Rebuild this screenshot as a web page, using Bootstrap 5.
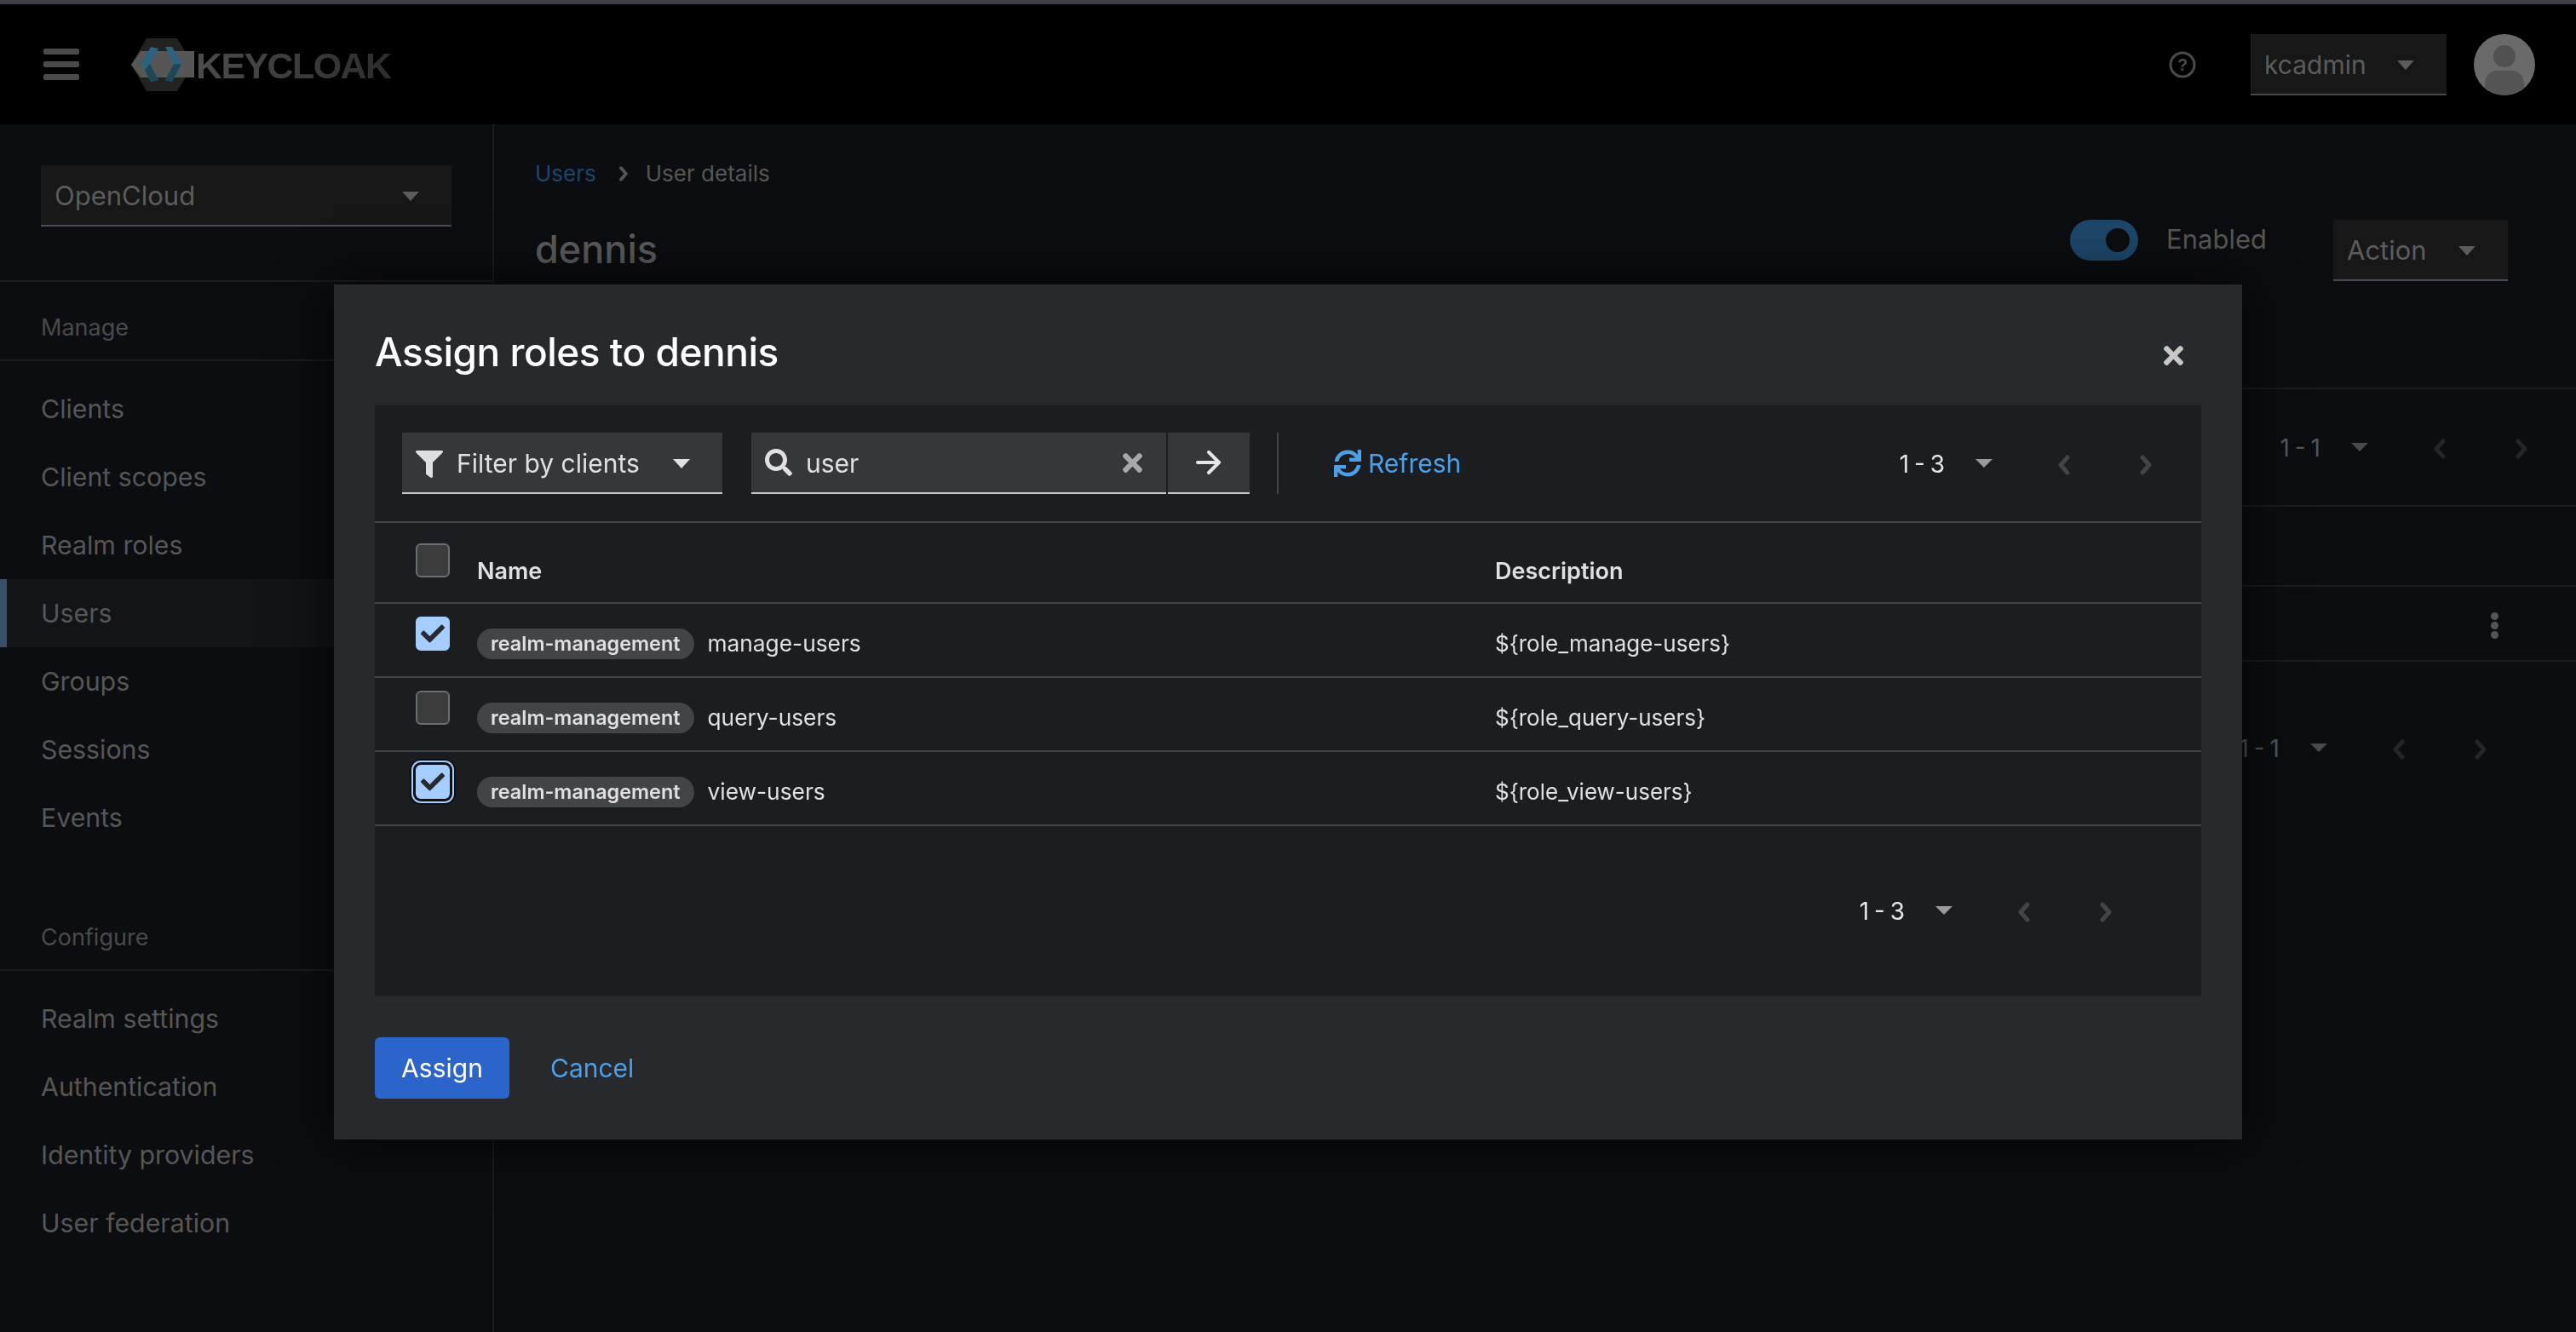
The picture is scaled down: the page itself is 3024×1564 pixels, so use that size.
<!DOCTYPE html>
<html lang="en">
<head>
    <meta charset="UTF-8">
    <meta name="viewport" content="width=device-width, initial-scale=1.0">
    <title>Keycloak - Assign roles</title>
    <link href="https://cdn.jsdelivr.net/npm/bootstrap@5.3.0/dist/css/bootstrap.min.css" rel="stylesheet">
    <style>
        body { background: #0c0d10; font-family: Inter, "Liberation Sans", sans-serif; font-size: 30.3px; color: #565656; overflow: hidden; height: 1564px; }
        .kc-strip { height: 5px; background: #3f3f46; }
        .kc-header { height: 141px; background: #000; padding: 0 48px 0 51px; flex-wrap: nowrap; }
        .kc-burger { width: 42px; height: 37px; }
        .kc-logo { margin-left: 61px; }
        .kc-logo-text { font-family: "Liberation Sans", sans-serif; font-weight: 700; font-size: 43px; letter-spacing: -1.6px; line-height: 1; padding-top: 3px; background: linear-gradient(90deg, #4c4c4c, #2d2d2d); -webkit-background-clip: text; background-clip: text; color: transparent; margin-left: 2px; }

        /* dropdowns that look like patternfly menu toggles */
        .kc-toggle { display: flex; align-items: center; justify-content: space-between; height: 72px; padding: 3px 38px 0 16px; background: #171717; color: #5c5c5c; border: 0; border-bottom: 2px solid #4a4a4a; border-radius: 0; font-size: 31px; }
        .kc-toggle:hover, .kc-toggle:active { background: #171717; color: #5c5c5c; border-bottom: 2px solid #4a4a4a; }
        .kc-toggle::after { margin: 0; border-top-width: 11px; border-left-width: 10px; border-right-width: 10px; }
        .kc-toggle-user { width: 230px; margin: 0 32px 0 64px; font-size: 30px; }
        .kc-toggle-realm { width: 482px; }
        .kc-toggle-action { width: 205px; }
        .kc-toggle-filter { width: 376px; background: #36373b; color: #e0e0e0; border-bottom-color: #c7c7c7; font-size: 30px; }
        .kc-toggle-filter:hover, .kc-toggle-filter:active { background: #36373b; color: #e0e0e0; border-bottom-color: #c7c7c7; }

        .kc-sidebar { width: 580px; border-right: 2px solid #1b1c1f; flex-shrink: 0; }
        .kc-realm { padding: 48px; height: 185px; border-bottom: 2px solid #1b1c1f; }
        .kc-group { height: 93px; line-height: 108px; padding-left: 48px; font-size: 27px; color: #4a4a4a; border-bottom: 2px solid #1b1c1f; }
        .kc-group-second { margin-top: 47px; }
        .kc-sidebar .list-group { padding-top: 16px; --bs-list-group-bg: transparent; --bs-list-group-color: #565656; --bs-list-group-border-width: 0; border-radius: 0; }
        .kc-sidebar .list-group-item { height: 80px; line-height: 80px; padding: 0 0 0 48px; }
        .kc-sidebar .list-group-item.active { background: #131417; color: #565656; border-left: 8px solid #3a5068; padding-left: 40px; margin: 0; }

        .kc-page-head { height: 311px; padding: 48px 48px 0; border-bottom: 2px solid #1b1c1f; }
        .kc-crumbs { font-size: 26px; line-height: 20px; }
        .kc-crumbs a { color: #1f4568; text-decoration: none; }
        .kc-crumbs svg { margin: 0 20px 0 26px; }
        .kc-name { font-size: 45px; font-weight: 500; color: #5a5a5a; margin: 5px 0 0; line-height: 60px; }
        .kc-head-row { margin-top: 44px; padding-right: 32px; }
        .kc-switch { width: 80px; height: 48px; background: #1e4668; border-radius: 24px; display: flex; align-items: center; justify-content: flex-end; padding-right: 10px; }
        .kc-switch i { width: 28px; height: 28px; border-radius: 50%; background: #0c0d10; }
        .kc-enabled { margin: 0 78px 0 33px; font-size: 31px; }
        .kc-bg-toolbar { height: 138px; border-bottom: 2px solid #1b1c1f; padding-right: 16px; }
        .kc-bg-head { height: 94px; border-bottom: 2px solid #1b1c1f; }
        .kc-bg-row { height: 88px; border-bottom: 2px solid #1b1c1f; padding-right: 91px; }
        .kc-kebab { width: 9px; height: 31px; margin-top: 4px; color: #555; }
        .kc-bg-foot { height: 202px; padding-right: 64px; }

        .kc-pager { font-size: 28px; color: #e6e6e6; }
        .kc-pager .count { word-spacing: -2px; padding-top: 2px; }
        .kc-pager .caret { width: 0; height: 0; margin-left: 36px; margin-right: 36px; border-top: 10px solid #9a9a9a; border-left: 10px solid transparent; border-right: 10px solid transparent; }
        .kc-pager .chev { width: 96px; text-align: center; color: #434448; line-height: 1; }
        .kc-pager-dim { color: #555; }
        .kc-pager-dim .caret { border-top-color: #4a4a4a; }
        .kc-pager-dim .chev { color: #242528; }

        .kc-modal .modal-dialog { max-width: 2240px; width: 2240px; margin: 334px 0 0 392px; }
        .kc-modal .modal-content { --bs-modal-bg: #27292d; height: 1004px; border: 0; border-radius: 0; box-shadow: 0 0 60px rgba(0, 0, 0, .75); }
        .kc-modal .modal-header { height: 142px; padding: 48px 69px 0 48px; border: 0; align-items: flex-start; }
        .kc-modal .modal-title { font-size: 46px; font-weight: 500; line-height: 62px; color: #fff; letter-spacing: -.5px; }
        .kc-close { margin-top: 24px; width: 23px; height: 23px; color: #c7c7c7; }
        .kc-modal .modal-body { padding: 0 48px; flex: none; }
        .kc-panel { background: #1b1d21; height: 694px; font-size: 26px; color: #e0e0e0; }
        .kc-toolbar { height: 138px; padding: 32px 17px 32px 32px; border-bottom: 2px solid #434448; }
        .kc-search { width: 585px; margin-left: 34px; height: 72px; }
        .kc-search-box { width: 487px; background: #36373b; border-bottom: 2px solid #c7c7c7; padding: 0 28px 0 16px; }
        .kc-search-box input { background: transparent; border: 0; color: #e0e0e0; font-size: 30px; padding: 2px 0 0 16px; box-shadow: none; }
        .kc-search-btn { width: 96px; margin-left: 2px; background: #36373b; border-bottom: 2px solid #c7c7c7; color: #e6e6e6; }
        .kc-vr { width: 2px; height: 72px; background: #434448; margin-left: 32px; }
        .kc-refresh { margin-left: 65px; color: #4d9fe6; font-size: 30px; gap: 8px; }
        .kc-table { --bs-table-bg: transparent; --bs-table-color: #e0e0e0; --bs-table-border-color: #434448; table-layout: fixed; }
        .kc-table > :not(caption) > * > * { border-bottom-width: 2px; padding: 0; vertical-align: top; font-size: 26.3px; line-height: 36px; }
        .kc-table th { font-weight: 600; height: 94px; padding-top: 39px; font-size: 27px; }
        .kc-table td { height: 87px; padding-top: 29px; }
        .kc-table .cb { width: 120px; padding: 15px 0 0 48px; }
        .kc-table th.cb { padding-top: 24px; }
        .kc-table .col-name { width: 1195px; }
        .kc-table td:last-child { font-size: 26px; }
        .form-check-input.kc-check { width: 40px; height: 40px; margin: 0; border: 2px solid #6a6e73; border-radius: 6px; background-color: #3c3c3c; display: block; }
        .form-check-input.kc-check:checked { background-color: #a6cdff; border-color: #a6cdff; background-size: 28px; --bs-form-check-bg-image: url("data:image/svg+xml,%3Csvg xmlns='http://www.w3.org/2000/svg' viewBox='0 0 512 512'%3E%3Cpath fill='%23292a2e' d='M173.898 439.404l-166.4-166.4c-9.997-9.997-9.997-26.206 0-36.204l36.203-36.204c9.997-9.998 26.207-9.998 36.204 0L192 312.69 432.095 72.596c9.997-9.997 26.207-9.997 36.204 0l36.203 36.204c9.997 9.997 9.997 26.206 0 36.204l-294.4 294.401c-9.998 9.997-26.207 9.997-36.204-.001z'/%3E%3C/svg%3E"); }
        .form-check-input.kc-check.kc-focus { box-shadow: 0 0 0 3px #0f1013, 0 0 0 5px #a6cdff, 0 0 0 7px #0f1013; }
        .kc-pill { background: #434448; color: #e0e0e0; font-size: 23.4px; font-weight: 600; padding: 0 16px; height: 36px; line-height: 36px; margin-right: 16px; vertical-align: top; }
        .kc-panel-foot { height: 197px; padding-right: 64px; }
        .kc-modal .modal-footer { padding: 48px; border: 0; justify-content: flex-start; gap: 16px; }
        .kc-modal .modal-footer > * { margin: 0; }
        .kc-btn-assign { width: 158px; height: 72px; font-size: 30px; background: #2b65cb; border: 0; border-radius: 6px; padding: 0; }
        .kc-btn-cancel { height: 72px; font-size: 30px; color: #4d9fe6; padding: 0 32px; text-decoration: none; border: 0; }
    </style>
</head>
<body class="d-flex flex-column">
    <!-- icon sprites -->
    <svg class="d-none">
        <symbol id="chev-l" viewBox="0 0 16 24"><path d="M12 3 4 12l8 9" fill="none" stroke="currentColor" stroke-width="5" stroke-linecap="round" stroke-linejoin="round"/></symbol>
        <symbol id="chev-r" viewBox="0 0 16 24"><path d="m4 3 8 9-8 9" fill="none" stroke="currentColor" stroke-width="5" stroke-linecap="round" stroke-linejoin="round"/></symbol>
        <symbol id="times" viewBox="0 0 352 512"><path fill="currentColor" d="M242.72 256l100.07-100.07c12.28-12.28 12.28-32.19 0-44.48l-22.24-22.24c-12.28-12.28-32.19-12.28-44.48 0L176 189.28 75.93 89.21c-12.28-12.28-32.19-12.28-44.48 0L9.21 111.45c-12.28 12.28-12.28 32.19 0 44.48L109.28 256 9.21 356.07c-12.28 12.28-12.28 32.19 0 44.48l22.24 22.24c12.28 12.28 32.2 12.28 44.48 0L176 322.72l100.07 100.07c12.28 12.28 32.2 12.28 44.48 0l22.24-22.24c12.28-12.28 12.28-32.19 0-44.48L242.72 256z"/></symbol>
    </svg>

    <div class="kc-strip"></div>
    <header class="navbar kc-header">
        <div class="d-flex align-items-center">
            <svg class="kc-burger" viewBox="0 0 42 37"><rect width="42" height="7" rx="2" fill="#4a4a4a"/><rect y="15" width="42" height="7" rx="2" fill="#4a4a4a"/><rect y="30" width="42" height="7" rx="2" fill="#4a4a4a"/></svg>
            <div class="kc-logo d-flex align-items-center">
                <svg width="74" height="62" viewBox="154 48 74 62">
                    <polygon points="172,48 208,48 227,79 208,110 172,110 154,79" fill="#222"/>
                    <polygon points="165,63 228,63 228,94 165,94 154,79" fill="#565656"/>
                    <polygon points="177,58 186,60 176,78 186,97 177,99 166,78" fill="#2a6480"/>
                    <polygon points="176,78 186,97 177,99 170,85" fill="#1d4659"/>
                    <polygon points="194,58 202,58 213,78 202,99 194,97 204,78" fill="#2a6480"/>
                    <polygon points="204,78 213,78 202,99 194,97" fill="#1d4659"/>
                </svg>
                <span class="kc-logo-text">KEYCLOAK</span>
            </div>
        </div>
        <div class="d-flex align-items-center">
            <svg width="32" height="32" viewBox="0 0 32 32"><circle cx="16" cy="16" r="14" fill="none" stroke="#4a4a4a" stroke-width="3"/><text x="16" y="23" text-anchor="middle" font-family="Liberation Sans, sans-serif" font-weight="700" font-size="20" fill="#4a4a4a">?</text></svg>
            <button class="btn dropdown-toggle kc-toggle kc-toggle-user" type="button">kcadmin</button>
            <svg width="72" height="72" viewBox="0 0 72 72"><defs><clipPath id="av"><circle cx="36" cy="36" r="36"/></clipPath></defs><g clip-path="url(#av)"><rect width="72" height="72" fill="#6a6a6a"/><circle cx="36" cy="26" r="13" fill="#515151"/><path d="M13 72V58c0-10 8-15 15-15h16c7 0 15 5 15 15v14z" fill="#545454"/></g></svg>
        </div>
    </header>

    <div class="d-flex flex-grow-1">
        <aside class="kc-sidebar">
            <div class="kc-realm">
                <button class="btn dropdown-toggle kc-toggle kc-toggle-realm" type="button">OpenCloud</button>
            </div>
            <div class="kc-group">Manage</div>
            <div class="list-group list-group-flush">
                <div class="list-group-item">Clients</div>
                <div class="list-group-item">Client scopes</div>
                <div class="list-group-item">Realm roles</div>
                <div class="list-group-item active">Users</div>
                <div class="list-group-item">Groups</div>
                <div class="list-group-item">Sessions</div>
                <div class="list-group-item">Events</div>
            </div>
            <div class="kc-group kc-group-second">Configure</div>
            <div class="list-group list-group-flush">
                <div class="list-group-item">Realm settings</div>
                <div class="list-group-item">Authentication</div>
                <div class="list-group-item">Identity providers</div>
                <div class="list-group-item">User federation</div>
            </div>
        </aside>

        <main class="flex-grow-1">
            <div class="kc-page-head">
                <div class="kc-crumbs d-flex align-items-center">
                    <a href="#">Users</a>
                    <svg width="12" height="18" viewBox="0 0 16 24"><use href="#chev-r" color="#555"/></svg>
                    <span>User details</span>
                </div>
                <div class="kc-head-row d-flex align-items-start justify-content-between">
                    <h1 class="kc-name">dennis</h1>
                    <div class="d-flex align-items-start">
                        <span class="kc-switch"><i></i></span>
                        <span class="kc-enabled">Enabled</span>
                        <button class="btn dropdown-toggle kc-toggle kc-toggle-action" type="button">Action</button>
                    </div>
                </div>
            </div>
            <div class="kc-bg-toolbar d-flex align-items-center justify-content-end">
                <div class="kc-pager kc-pager-dim d-flex align-items-center">
                    <span class="count">1 - 1</span><span class="caret"></span>
                    <span class="chev"><svg width="16" height="24"><use href="#chev-l"/></svg></span>
                    <span class="chev"><svg width="16" height="24"><use href="#chev-r"/></svg></span>
                </div>
            </div>
            <div class="kc-bg-head"></div>
            <div class="kc-bg-row d-flex align-items-center justify-content-end">
                <svg class="kc-kebab" viewBox="0 0 9 31"><circle cx="4.5" cy="4.5" r="4.5" fill="currentColor"/><circle cx="4.5" cy="15.5" r="4.5" fill="currentColor"/><circle cx="4.5" cy="26.5" r="4.5" fill="currentColor"/></svg>
            </div>
            <div class="kc-bg-foot d-flex align-items-center justify-content-end">
                <div class="kc-pager kc-pager-dim d-flex align-items-center">
                    <span class="count">1 - 1</span><span class="caret"></span>
                    <span class="chev"><svg width="16" height="24"><use href="#chev-l"/></svg></span>
                    <span class="chev"><svg width="16" height="24"><use href="#chev-r"/></svg></span>
                </div>
            </div>
        </main>
    </div>

    <div class="modal d-block kc-modal" tabindex="-1">
        <div class="modal-dialog">
            <div class="modal-content">
                <div class="modal-header justify-content-between">
                    <h2 class="modal-title">Assign roles to dennis</h2>
                    <svg class="kc-close" viewBox="0 0 352 352"><use href="#times" y="-80" width="352" height="512"/></svg>
                </div>
                <div class="modal-body">
                    <div class="kc-panel">
                        <div class="kc-toolbar d-flex align-items-center">
                            <button class="btn dropdown-toggle kc-toggle kc-toggle-filter" type="button">
                                <span class="d-flex align-items-center gap-3">
                                    <svg width="32" height="32" viewBox="0 0 512 512"><path fill="#e0e0e0" d="M487.976 0H24.028C2.71 0-8.047 25.866 7.058 40.971L192 225.941V432c0 7.831 3.821 15.17 10.237 19.662l80 55.98C298.02 518.69 320 507.493 320 487.98V225.941l184.947-184.97C520.021 25.896 509.338 0 487.976 0z"/></svg>
                                    Filter by clients
                                </span>
                            </button>
                            <div class="kc-search d-flex">
                                <div class="kc-search-box d-flex align-items-center">
                                    <svg class="flex-shrink-0" width="32" height="32" viewBox="0 0 512 512"><path fill="#e0e0e0" d="M505 442.7L405.3 343c-4.5-4.5-10.6-7-17-7H372c27.6-35.3 44-79.7 44-128C416 93.1 322.9 0 208 0S0 93.1 0 208s93.1 208 208 208c48.3 0 92.7-16.4 128-44v16.3c0 6.4 2.5 12.5 7 17l99.7 99.7c9.4 9.4 24.6 9.4 33.9 0l28.3-28.3c9.4-9.4 9.4-24.6.1-34zM208 336c-70.7 0-128-57.2-128-128 0-70.7 57.2-128 128-128 70.7 0 128 57.2 128 128 0 70.7-57.2 128-128 128z"/></svg>
                                    <input type="text" class="form-control" value="user">
                                    <svg class="flex-shrink-0" width="23" height="23" viewBox="0 0 352 352" color="#a8a8a8"><use href="#times" y="-80" width="352" height="512"/></svg>
                                </div>
                                <div class="kc-search-btn d-flex align-items-center justify-content-center">
                                    <svg width="30" height="28" viewBox="0 0 30 28"><path d="M2 14h25M15 2l12 12-12 12" fill="none" stroke="currentColor" stroke-width="4" stroke-linecap="round" stroke-linejoin="round"/></svg>
                                </div>
                            </div>
                            <span class="kc-vr"></span>
                            <span class="kc-refresh d-flex align-items-center">
                                <svg width="32" height="32" viewBox="0 0 512 512"><path fill="currentColor" d="M440.65 12.57l4 82.77A247.16 247.16 0 0 0 255.83 8C134.73 8 33.91 94.92 12.29 209.82A12 12 0 0 0 24.09 224h49.05a12 12 0 0 0 11.67-9.26 175.91 175.91 0 0 1 317-56.94l-101.46-4.86a12 12 0 0 0-12.57 12v47.41a12 12 0 0 0 12 12H500a12 12 0 0 0 12-12V12a12 12 0 0 0-12-12h-47.37a12 12 0 0 0-11.98 12.57zM255.83 432a175.61 175.61 0 0 1-146-77.8l101.8 4.87a12 12 0 0 0 12.57-12v-47.4a12 12 0 0 0-12-12H12a12 12 0 0 0-12 12V500a12 12 0 0 0 12 12h47.35a12 12 0 0 0 12-12.6l-4.15-82.57A247.17 247.17 0 0 0 255.83 504c121.11 0 221.93-86.92 243.55-201.82a12 12 0 0 0-11.8-14.18h-49.05a12 12 0 0 0-11.67 9.26A175.86 175.86 0 0 1 255.83 432z"/></svg>
                                Refresh
                            </span>
                            <div class="kc-pager d-flex align-items-center ms-auto">
                                <span class="count">1 - 3</span><span class="caret"></span>
                                <span class="chev"><svg width="16" height="24"><use href="#chev-l"/></svg></span>
                                <span class="chev"><svg width="16" height="24"><use href="#chev-r"/></svg></span>
                            </div>
                        </div>
                        <table class="table kc-table mb-0">
                            <thead>
                                <tr>
                                    <th class="cb"><input class="form-check-input kc-check" type="checkbox"></th>
                                    <th class="col-name">Name</th>
                                    <th>Description</th>
                                </tr>
                            </thead>
                            <tbody>
                                <tr>
                                    <td class="cb"><input class="form-check-input kc-check" type="checkbox" checked></td>
                                    <td><span class="badge rounded-pill kc-pill">realm-management</span>manage-users</td>
                                    <td>${role_manage-users}</td>
                                </tr>
                                <tr>
                                    <td class="cb"><input class="form-check-input kc-check" type="checkbox"></td>
                                    <td><span class="badge rounded-pill kc-pill">realm-management</span>query-users</td>
                                    <td>${role_query-users}</td>
                                </tr>
                                <tr>
                                    <td class="cb"><input class="form-check-input kc-check kc-focus" type="checkbox" checked></td>
                                    <td><span class="badge rounded-pill kc-pill">realm-management</span>view-users</td>
                                    <td>${role_view-users}</td>
                                </tr>
                            </tbody>
                        </table>
                        <div class="kc-panel-foot d-flex align-items-center justify-content-end">
                            <div class="kc-pager d-flex align-items-center">
                                <span class="count">1 - 3</span><span class="caret"></span>
                                <span class="chev"><svg width="16" height="24"><use href="#chev-l"/></svg></span>
                                <span class="chev"><svg width="16" height="24"><use href="#chev-r"/></svg></span>
                            </div>
                        </div>
                    </div>
                </div>
                <div class="modal-footer">
                    <button class="btn btn-primary kc-btn-assign" type="button">Assign</button>
                    <button class="btn btn-link kc-btn-cancel" type="button">Cancel</button>
                </div>
            </div>
        </div>
    </div>

    <script src="https://cdn.jsdelivr.net/npm/bootstrap@5.3.0/dist/js/bootstrap.bundle.min.js"></script>
</body>
</html>
